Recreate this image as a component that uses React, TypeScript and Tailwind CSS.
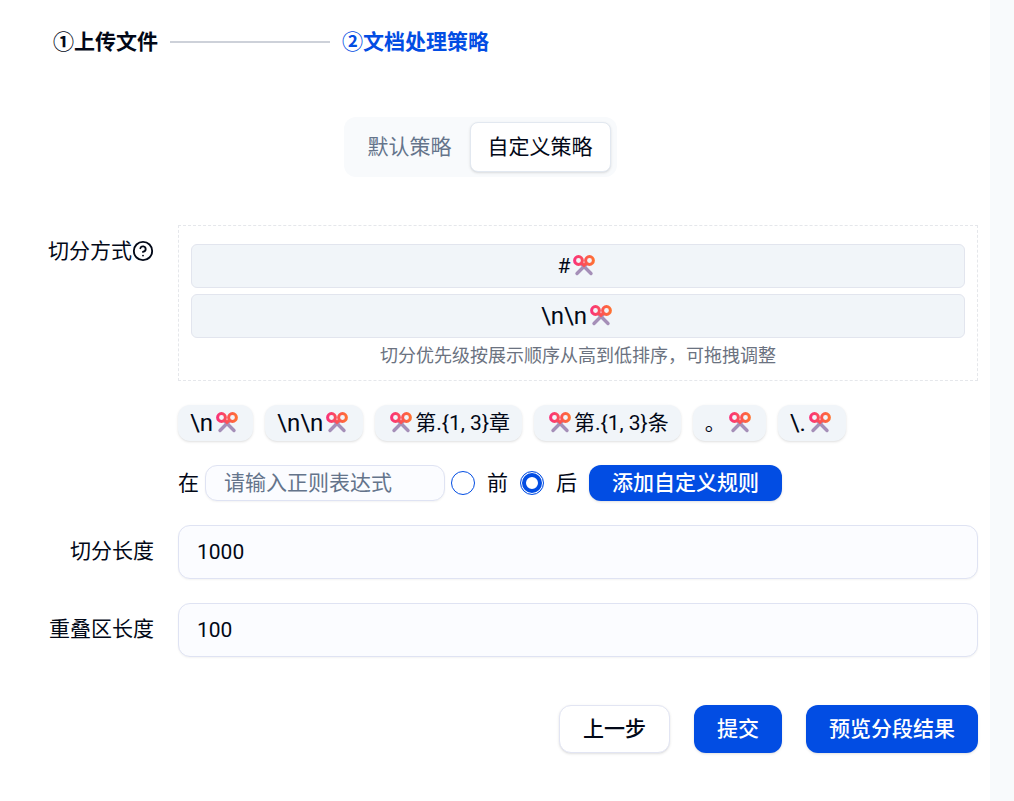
import { useState } from "react";
import type { InputHTMLAttributes } from "react";
import { CircleHelp } from "lucide-react";
import clsx from "clsx";

type Position = "before" | "after";

interface Rule {
  text: string;
  position: Position;
}

const activeRules: Rule[] = [
  { text: "#", position: "after" },
  { text: "\\n\\n", position: "after" },
];

const presetRules: Rule[] = [
  { text: "\\n", position: "after" },
  { text: "\\n\\n", position: "after" },
  { text: "第.{1, 3}章", position: "before" },
  { text: "第.{1, 3}条", position: "before" },
  { text: "。", position: "after" },
  { text: "\\.", position: "after" },
];

function Scissors() {
  return (
    <svg className="h-6 w-7 shrink-0" viewBox="0 0 28 24" fill="none" aria-hidden="true">
      <defs>
        <linearGradient id="handles" x1="3" y1="0" x2="25" y2="0" gradientUnits="userSpaceOnUse">
          <stop offset="0" stopColor="#f92f7c" />
          <stop offset="1" stopColor="#ff7430" />
        </linearGradient>
      </defs>
      <path d="M12 10.5 21 19.5M16 10.5 7 19.5" stroke="#a58fb8" strokeWidth="3.4" strokeLinecap="round" />
      <g stroke="url(#handles)" strokeWidth="3">
        <circle cx="8.5" cy="6.5" r="3.9" />
        <circle cx="19.5" cy="6.5" r="3.9" />
        <path d="M11.5 9 14 11.5 16.5 9" />
      </g>
    </svg>
  );
}

function RuleLabel({ rule }: { rule: Rule }) {
  return (
    <>
      {rule.position === "before" && <Scissors />}
      <span className={clsx(rule.text.startsWith("\\") && "text-2xl")}>{rule.text}</span>
      {rule.position === "after" && <Scissors />}
    </>
  );
}

function NumberField({ id, label, ...props }: { id: string; label: string } & InputHTMLAttributes<HTMLInputElement>) {
  return (
    <div className="flex gap-6">
      <label htmlFor={id} className="w-[105px] shrink-0 pt-2.5 text-right whitespace-nowrap">
        {label}
      </label>
      <input
        id={id}
        inputMode="numeric"
        className="h-[54px] min-w-0 flex-1 rounded-xl border border-[#dfe3f3] bg-[#fbfcff] px-[18px] shadow-xs outline-none"
        {...props}
      />
    </div>
  );
}

const primaryButton =
  "rounded-xl bg-[#024de3] px-[23px] font-medium text-white shadow-sm hover:bg-[#0243c7]";

export default function App() {
  const [tab, setTab] = useState("custom");
  const [position, setPosition] = useState<Position>("after");

  return (
    <div className="min-h-screen bg-[#f8fafc] pr-6 font-['Roboto','Noto_Sans_CJK_SC',sans-serif] text-[21px] leading-8 text-[#020817]">
      <main className="min-h-screen bg-white pt-[26px] pr-3 pb-12 pl-[49px]">
        <ol className="flex items-center gap-3 pl-1 font-bold">
          <li>①上传文件</li>
          <li aria-hidden="true" className="h-0.5 w-40 bg-[#cdd1d9]" />
          <li className="text-[#024de3]">②文档处理策略</li>
        </ol>

        <div className="mt-[59px] flex justify-center pr-[67px]">
          <div role="tablist" className="flex rounded-xl bg-[#f8fafc] px-1.5 py-[5px]">
            {[
              { id: "default", label: "默认策略" },
              { id: "custom", label: "自定义策略" },
            ].map((item) => (
              <button
                key={item.id}
                type="button"
                role="tab"
                aria-selected={tab === item.id}
                onClick={() => setTab(item.id)}
                className={clsx(
                  "h-[50px] rounded-lg border px-[17px]",
                  tab === item.id ? "border-[#e2e8f0] bg-white shadow-sm" : "border-transparent text-[#64748b]"
                )}
              >
                {item.label}
              </button>
            ))}
          </div>
        </div>

        <form className="mt-12" onSubmit={(e) => e.preventDefault()}>
          <div className="flex gap-6">
            <div className="flex w-[105px] shrink-0 items-center justify-end self-start pt-2.5 whitespace-nowrap">
              切分方式
              <CircleHelp className="h-[22px] w-[22px] shrink-0" />
            </div>

            <div className="min-w-0 flex-1">
              <div className="border border-dashed border-[#e5e7eb] px-3 pt-[18px] pb-2">
                <ul className="space-y-1.5">
                  {activeRules.map((rule) => (
                    <li
                      key={rule.text}
                      draggable
                      className="flex h-11 cursor-move items-center justify-center rounded-md border border-[#e2e5ee] bg-[#f1f5f9]"
                    >
                      <RuleLabel rule={rule} />
                    </li>
                  ))}
                </ul>
                <p className="mt-0.5 text-center text-lg leading-8 text-[#6b7280]">
                  切分优先级按展示顺序从高到低排序，可拖拽调整
                </p>
              </div>

              <div className="mt-6 flex flex-wrap gap-3">
                {presetRules.map((rule) => (
                  <button
                    key={rule.text}
                    type="button"
                    className="flex h-9 items-center rounded-xl bg-[#f1f5f9] px-3 shadow-sm"
                  >
                    <RuleLabel rule={rule} />
                  </button>
                ))}
              </div>

              <div className="mt-6 flex items-center">
                <label htmlFor="pattern">在</label>
                <input
                  id="pattern"
                  placeholder="请输入正则表达式"
                  className="ml-1.5 h-9 w-60 rounded-xl border border-[#dfe3f3] bg-[#fbfcff] px-[18px] shadow-xs outline-none placeholder:text-[#64748b]"
                />
                <input
                  id="before"
                  type="radio"
                  name="position"
                  checked={position === "before"}
                  onChange={() => setPosition("before")}
                  className="ml-1.5 h-6 w-6 appearance-none rounded-full border border-[#024de3] checked:shadow-[inset_0_0_0_1px_#fff,inset_0_0_0_5px_#024de3]"
                />
                <label htmlFor="before" className="ml-3">前</label>
                <input
                  id="after"
                  type="radio"
                  name="position"
                  checked={position === "after"}
                  onChange={() => setPosition("after")}
                  className="ml-3 h-6 w-6 appearance-none rounded-full border border-[#024de3] checked:shadow-[inset_0_0_0_1px_#fff,inset_0_0_0_5px_#024de3]"
                />
                <label htmlFor="after" className="ml-3">后</label>
                <button type="button" className={clsx(primaryButton, "ml-3 h-9")}>
                  添加自定义规则
                </button>
              </div>
            </div>
          </div>

          <div className="mt-6 space-y-6">
            <NumberField id="length" label="切分长度" defaultValue="1000" />
            <NumberField id="overlap" label="重叠区长度" defaultValue="100" />
          </div>

          <div className="mt-12 flex justify-end gap-6">
            <button
              type="button"
              className="h-12 rounded-xl border border-[#e2e5f3] bg-white px-[23px] font-medium shadow-sm"
            >
              上一步
            </button>
            <button type="submit" className={clsx(primaryButton, "h-12")}>
              提交
            </button>
            <button type="button" className={clsx(primaryButton, "h-12")}>
              预览分段结果
            </button>
          </div>
        </form>
      </main>
    </div>
  );
}
